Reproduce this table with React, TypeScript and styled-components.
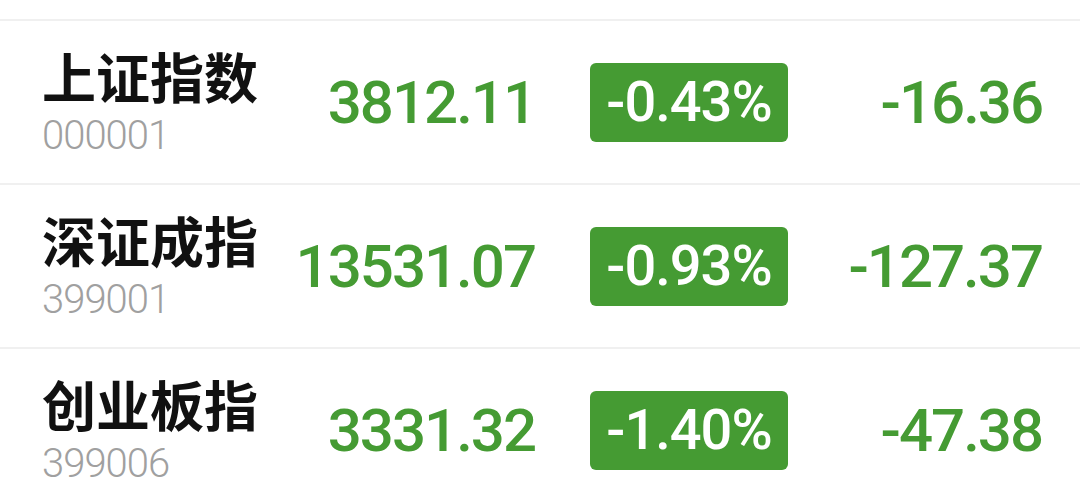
import React from 'react';
import styled, { createGlobalStyle } from 'styled-components';

const GlobalStyle = createGlobalStyle`
  html, body {
    margin: 0;
    padding: 0;
    background: #ffffff;
    overflow: hidden;
  }
  body {
    font-family: Roboto, "Noto Sans CJK SC", sans-serif;
  }
`;

const indices = [
  { name: '上证指数', code: '000001', price: '3812.11', pct: '-0.43%', change: '-16.36' },
  { name: '深证成指', code: '399001', price: '13531.07', pct: '-0.93%', change: '-127.37' },
  { name: '创业板指', code: '399006', price: '3331.32', pct: '-1.40%', change: '-47.38' },
];

/**
 * Index quotes list.
 */
export default function App() {
  return (
    <>
      <GlobalStyle />
      <Page>
        <QuoteList>
          {indices.map((item) => (
            <QuoteRow key={item.code}>
              <NameBlock>
                <IndexName>{item.name}</IndexName>
                <IndexCode>{item.code}</IndexCode>
              </NameBlock>
              <Price>{item.price}</Price>
              <PercentBadge>{item.pct}</PercentBadge>
              <Change>{item.change}</Change>
            </QuoteRow>
          ))}
        </QuoteList>
      </Page>
    </>
  );
}

const Page = styled.div`
  width: 1080px;
  height: 496px;
  padding-top: 19px;
  box-sizing: border-box;
  overflow: hidden;
`;

const QuoteList = styled.div`
  border-top: 2px solid #f0f0f0;
`;

const QuoteRow = styled.div`
  display: grid;
  grid-template-columns: 220px 273px 1fr 254px;
  align-items: center;
  height: 162px;
  padding: 0 38px 0 42px;
  border-bottom: 2px solid #f0f0f0;
`;

const NameBlock = styled.div`
  display: flex;
  flex-direction: column;
  gap: 12px;
`;

const IndexName = styled.div`
  font-family: "Noto Sans CJK SC", sans-serif;
  font-size: 54px;
  font-weight: 700;
  line-height: 56px;
  color: #111111;
`;

const IndexCode = styled.div`
  font-family: Roboto, sans-serif;
  font-size: 40px;
  font-weight: 300;
  line-height: 40px;
  letter-spacing: -1px;
  color: #a0a0a0;
`;

const Price = styled.div`
  font-family: Roboto, sans-serif;
  font-size: 60px;
  font-weight: 500;
  letter-spacing: -2px;
  color: #459b33;
  text-align: right;
`;

const PercentBadge = styled.div`
  justify-self: end;
  width: 198px;
  height: 79px;
  border-radius: 6px;
  background: #459b33;
  color: #ffffff;
  display: flex;
  align-items: center;
  justify-content: center;
  font-family: Roboto, sans-serif;
  font-size: 56px;
  font-weight: 500;
  letter-spacing: -1px;
`;

const Change = styled.div`
  font-family: Roboto, sans-serif;
  font-size: 60px;
  font-weight: 500;
  letter-spacing: -2px;
  color: #459b33;
  text-align: right;
`;
